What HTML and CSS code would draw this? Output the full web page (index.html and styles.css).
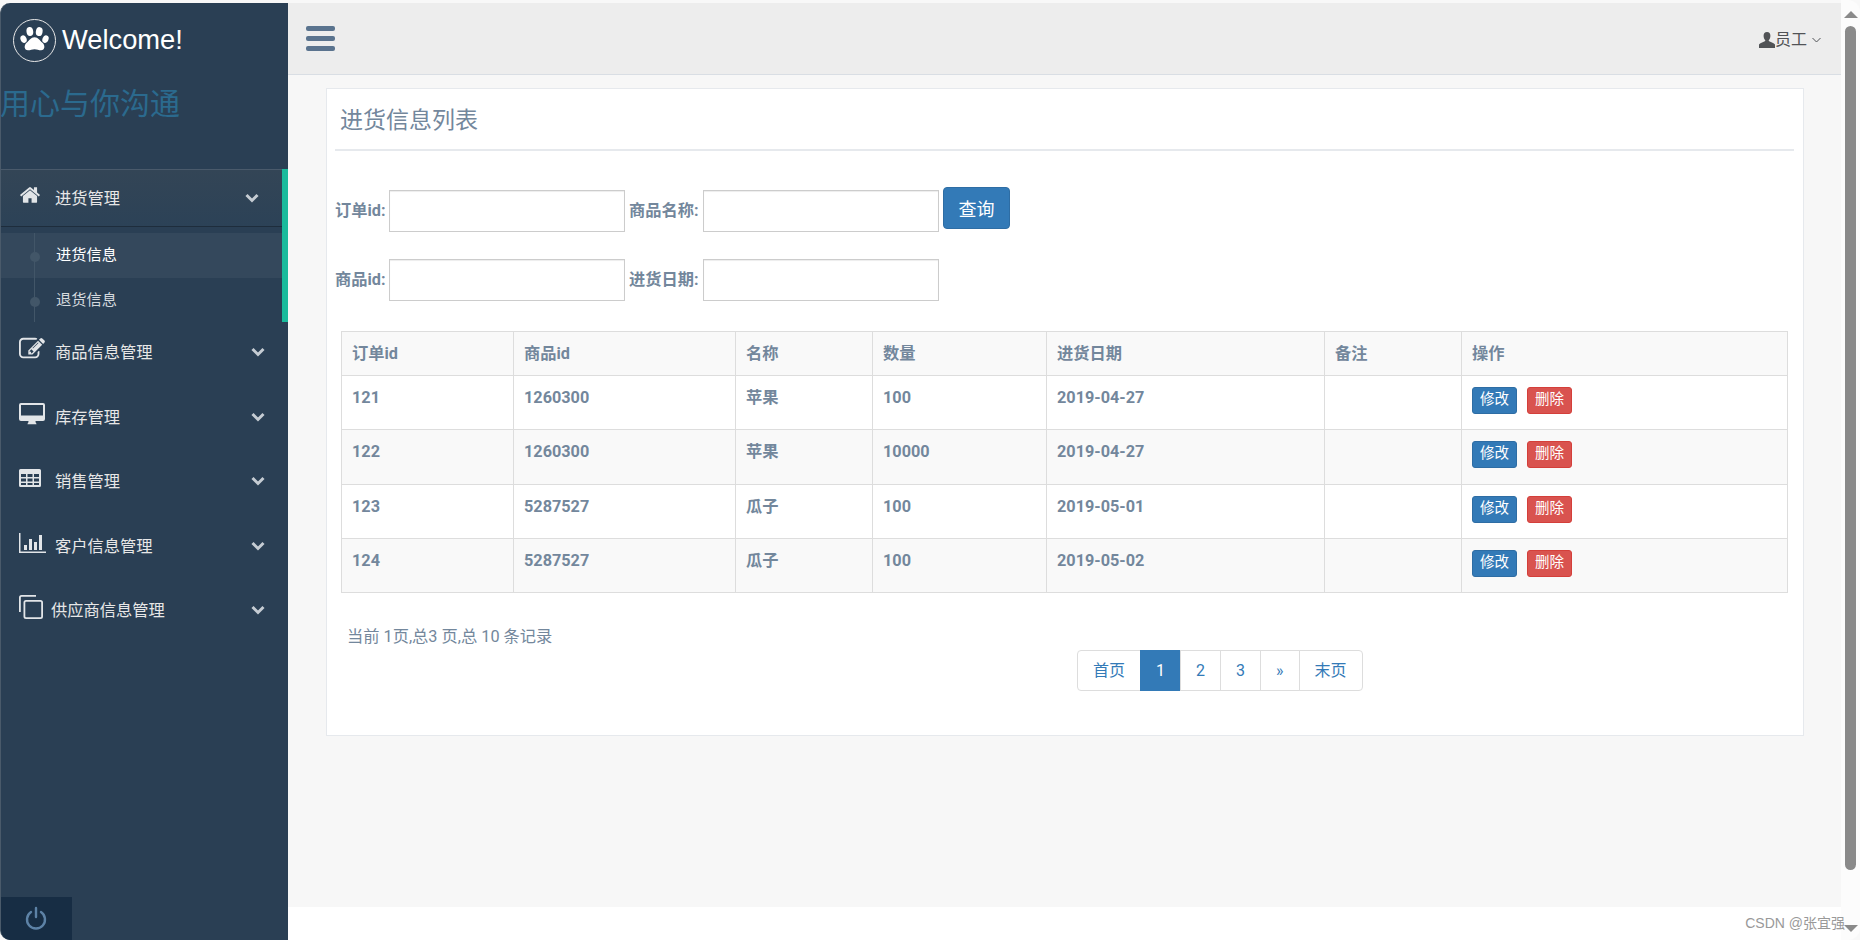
FILE: index.html
```html
<!DOCTYPE html>
<html lang="zh-CN">
<head>
  <meta charset="UTF-8">
  <title>进货信息列表</title>
  <link rel="stylesheet" href="styles.css">
</head>
<body>
  <div class="window">
    <!-- 左侧菜单 -->
    <aside class="sidebar">
      <div class="brand">
        <span class="brand-logo">
          <svg viewBox="0 0 32 32" width="30" height="30" fill="#fff">
            <ellipse cx="10.500" cy="7" rx="3.600" ry="4.800" transform="rotate(-8 10.500 7)"/>
            <ellipse cx="20.500" cy="7" rx="3.600" ry="4.800" transform="rotate(10 20.500 7)"/>
            <ellipse cx="3.800" cy="15" rx="3.200" ry="4.200" transform="rotate(-22 3.800 15)"/>
            <ellipse cx="27.200" cy="15" rx="3.200" ry="4.200" transform="rotate(22 27.200 15)"/>
            <path d="M15.500 13c4 0 5.500 3.500 8.500 6 3 2.700 2.700 8-1.500 8-2.800 0-4.200-1.200-7-1.200s-4.200 1.200-7 1.200c-4.200 0-4.500-5.300-1.500-8 3-2.500 4.500-6 8.500-6z"/>
          </svg>
        </span>
        <span class="brand-name">Welcome!</span>
      </div>
      <div class="tagline">用心与你沟通</div>

      <ul class="menu">
        <li class="menu-group open">
          <a class="menu-item" href="#">
            <svg class="menu-icon" viewBox="0 0 1792 1792" width="24" height="24"><path d="M1472 992v480q0 26-19 45t-45 19h-384v-384h-256v384h-384q-26 0-45-19t-19-45v-480q0-1 .5-3t.5-3l575-474 575 474q1 2 1 6zm223-69l-62 74q-8 9-21 11h-3q-13 0-21-7l-692-577-692 577q-12 8-24 7-13-2-21-11l-62-74q-8-10-7-23.500t11-21.500l719-599q32-26 76-26t76 26l244 204v-195q0-14 9-23t23-9h192q14 0 23 9t9 23v408l219 182q10 8 11 21.500t-7 23.500z"/></svg>
            <span class="menu-text">进货管理</span>
            <svg class="chevron" viewBox="0 0 14 10" width="14" height="10"><path d="M1.500 2l5.500 5.500 5.500-5.500"/></svg>
          </a>
          <ul class="submenu">
            <li class="current"><a href="#">进货信息</a></li>
            <li><a href="#">退货信息</a></li>
          </ul>
        </li>
        <li>
          <a class="menu-item" href="#">
            <svg class="menu-icon" viewBox="0 0 1792 1792" width="26" height="26"><path d="M888 1184l116-116-152-152-116 116v56h96v96h56zm440-720q-16-16-33 1l-350 350q-17 17-1 33t33-1l350-350q17-17 1-33zm80 594v190q0 119-84.500 203.500t-203.500 84.500h-832q-119 0-203.500-84.500t-84.500-203.500v-832q0-119 84.500-203.500t203.500-84.500h832q63 0 117 25 15 7 18 23 3 17-9 29l-49 49q-14 14-32 8-23-6-45-6h-832q-66 0-113 47t-47 113v832q0 66 47 113t113 47h832q66 0 113-47t47-113v-126q0-13 9-22l64-64q15-15 35-7t20 29zm-96-738l288 288-672 672h-288v-288zm444 132l-92 92-288-288 92-92q28-28 68-28t68 28l152 152q28 28 28 68t-28 68z"/></svg>
            <span class="menu-text">商品信息管理</span>
            <svg class="chevron" viewBox="0 0 14 10" width="14" height="10"><path d="M1.500 2l5.500 5.500 5.500-5.500"/></svg>
          </a>
        </li>
        <li>
          <a class="menu-item" href="#">
            <svg class="menu-icon" viewBox="0 0 26 22" width="26" height="22"><path fill-rule="evenodd" d="M2 0h22a2 2 0 0 1 2 2v14a2 2 0 0 1-2 2h-7.500c0 1.500.5 2 1 2.700v.6h-9v-.6c.5-.7 1-1.200 1-2.700H2a2 2 0 0 1-2-2V2a2 2 0 0 1 2-2zm0 2v10.500h22V2z"/></svg>
            <span class="menu-text">库存管理</span>
            <svg class="chevron" viewBox="0 0 14 10" width="14" height="10"><path d="M1.500 2l5.500 5.500 5.500-5.500"/></svg>
          </a>
        </li>
        <li>
          <a class="menu-item" href="#">
            <svg class="menu-icon" viewBox="0 0 22 18" width="22" height="18"><path fill-rule="evenodd" d="M1.500 0h19A1.500 1.500 0 0 1 22 1.500v15a1.500 1.500 0 0 1-1.500 1.500h-19A1.500 1.500 0 0 1 0 16.500v-15A1.500 1.500 0 0 1 1.500 0zM2 5v3h5V5zm6.500 0v3h5V5zM15 5v3h5V5zM2 9.500v3h5v-3zm6.500 0v3h5v-3zm6.500 0v3h5v-3zM2 14v2h5v-2zm6.500 0v2h5v-2zm6.500 0v2h5v-2z"/></svg>
            <span class="menu-text">销售管理</span>
            <svg class="chevron" viewBox="0 0 14 10" width="14" height="10"><path d="M1.500 2l5.500 5.500 5.500-5.500"/></svg>
          </a>
        </li>
        <li>
          <a class="menu-item" href="#">
            <svg class="menu-icon" viewBox="0 0 27 20" width="27" height="20"><path d="M0 0h1.500v18.500H27V20H0z"/><path d="M5 12h3v5H5zM10 6h3v11h-3zM15 9h3v8h-3zM20 2h3v15h-3z"/></svg>
            <span class="menu-text">客户信息管理</span>
            <svg class="chevron" viewBox="0 0 14 10" width="14" height="10"><path d="M1.500 2l5.500 5.500 5.500-5.500"/></svg>
          </a>
        </li>
        <li>
          <a class="menu-item menu-item-wide" href="#">
            <svg class="menu-icon" viewBox="0 0 24 24" width="24" height="24"><path d="M2.500 0H17v1.800H2.500a.7.7 0 0 0-.7.7V17H0V2.500A2.500 2.500 0 0 1 2.500 0z"/><path fill-rule="evenodd" d="M7 5h14.500A2.500 2.500 0 0 1 24 7.500v14a2.500 2.500 0 0 1-2.500 2.500H7a2.500 2.500 0 0 1-2.500-2.500v-14A2.500 2.500 0 0 1 7 5zm0 1.800a.7.700 0 0 0-.7.7v14c0 .4.300.7.700.7h14.500a.7.700 0 0 0 .7-.7v-14a.7.700 0 0 0-.7-.7z"/></svg>
            <span class="menu-text">供应商信息管理</span>
            <svg class="chevron" viewBox="0 0 14 10" width="14" height="10"><path d="M1.500 2l5.500 5.500 5.500-5.500"/></svg>
          </a>
        </li>
      </ul>

      <div class="sidebar-footer">
        <a class="logout" href="#">
          <svg viewBox="0 0 22 24" width="22" height="24" fill="none" stroke="#5d82a6" stroke-width="2.400" stroke-linecap="round"><path d="M11 2v9"/><path d="M6 6a9 9 0 1 0 10 0"/></svg>
        </a>
      </div>
    </aside>

    <div class="main">
      <header class="topbar">
        <a class="toggle" href="#"><i></i><i></i><i></i></a>
        <a class="user" href="#">
          <svg viewBox="0 0 16 16" width="16" height="16" fill="#515356"><path d="M8 0c2.300 0 3.400 1.600 3.400 3.800 0 1.700-.6 3.300-1.500 4.300-.3.400-.2 1 .3 1.200 2 .8 4.800 2 5.800 3.200.3.500 0 3.500 0 3.500H0s-.3-3 0-3.500c1-1.200 3.800-2.400 5.800-3.200.5-.2.600-.8.300-1.200-.9-1-1.500-2.600-1.500-4.300C4.600 1.600 5.700 0 8 0z"/></svg>
          <span>员工</span>
          <svg class="user-caret" viewBox="0 0 9 6" width="9" height="6"><path d="M.5 1l4 4 4-4"/></svg>
        </a>
      </header>

      <main class="content">
        <section class="panel">
          <h2 class="panel-title">进货信息列表</h2>

          <form class="search-form">
            <label>订单id:</label>
            <input type="text">
            <label>商品名称:</label>
            <input type="text">
            <button type="button" class="btn-query">查询</button>
            <label>商品id:</label>
            <input type="text">
            <label>进货日期:</label>
            <input type="text">
          </form>

          <table class="list">
            <thead>
              <tr>
                <th class="col-order">订单id</th>
                <th class="col-goods">商品id</th>
                <th class="col-name">名称</th>
                <th class="col-num">数量</th>
                <th class="col-date">进货日期</th>
                <th class="col-note">备注</th>
                <th>操作</th>
              </tr>
            </thead>
            <tbody>
              <tr>
                <td>121</td><td>1260300</td><td>苹果</td><td>100</td><td>2019-04-27</td><td></td>
                <td><a class="btn blue" href="#">修改</a><a class="btn red" href="#">删除</a></td>
              </tr>
              <tr>
                <td>122</td><td>1260300</td><td>苹果</td><td>10000</td><td>2019-04-27</td><td></td>
                <td><a class="btn blue" href="#">修改</a><a class="btn red" href="#">删除</a></td>
              </tr>
              <tr>
                <td>123</td><td>5287527</td><td>瓜子</td><td>100</td><td>2019-05-01</td><td></td>
                <td><a class="btn blue" href="#">修改</a><a class="btn red" href="#">删除</a></td>
              </tr>
              <tr>
                <td>124</td><td>5287527</td><td>瓜子</td><td>100</td><td>2019-05-02</td><td></td>
                <td><a class="btn blue" href="#">修改</a><a class="btn red" href="#">删除</a></td>
              </tr>
            </tbody>
          </table>

          <p class="page-info">当前 1页,总3 页,总 10 条记录</p>
          <ul class="pagination">
            <li><a href="#">首页</a></li>
            <li class="active"><a href="#">1</a></li>
            <li><a href="#">2</a></li>
            <li><a href="#">3</a></li>
            <li><a href="#">»</a></li>
            <li><a href="#">末页</a></li>
          </ul>
        </section>
      </main>
      <div class="page-bottom"></div>
    </div>

    <!-- 滚动条 -->
    <div class="scrollbar">
      <span class="arrow-up"></span>
      <span class="thumb"></span>
      <span class="arrow-down"></span>
    </div>
  </div>
  <div class="watermark">CSDN @张宜强</div>
</body>
</html>
```

FILE: styles.css
```css
/* 通用样式 */
* {
  margin: 0;
  padding: 0;
  box-sizing: border-box;
}
a {
  color: inherit;
  text-decoration: none;
}
ul {
  list-style: none;
}
html, body {
  height: 100%;
  overflow: hidden;
}
body {
  position: relative;
  font: 16.250px/22px Roboto, "Noto Sans CJK SC", sans-serif;
  color: #73879c;
  background: #fff;
}
.window {
  display: flex;
  height: 940px;
  background: #f8f8f8;
}

/* 左侧菜单 */
.sidebar {
  display: flex;
  flex-direction: column;
  flex: none;
  width: 288px;
  margin-top: 3px;
  border-left: 1px solid #4a5a6a;
  border-radius: 10px 0 0 10px;
  color: #e7e7e7;
  background: #2a3f54;
  overflow: hidden;
}
.brand {
  display: flex;
  align-items: center;
  height: 74px;
  padding-left: 12px;
}
.brand-logo {
  display: flex;
  align-items: center;
  justify-content: center;
  width: 43px;
  height: 43px;
  border: 1px solid #e7e7e7;
  border-radius: 50%;
}
.brand-name {
  margin-left: 6px;
  font: 27.300px/36px "Liberation Sans", sans-serif;
  color: #fff;
}
.tagline {
  height: 92px;
  margin-left: -1px;
  padding-top: 7px;
  font-size: 30px;
  line-height: 40px;
  color: #2b6a8e;
}
.menu {
  flex: 1;
}
.menu-item {
  position: relative;
  display: flex;
  align-items: center;
  height: 64.500px;
  padding-left: 18px;
}
.menu-icon {
  flex: none;
  margin-top: -10px;
  fill: #e2e5e8;
}
.menu-text {
  position: absolute;
  left: 54px;
  margin-top: -2px;
}
.menu-item-wide .menu-text {
  left: 50px;
}
.chevron {
  position: absolute;
  left: 250px;
  top: 25px;
  fill: none;
  stroke: #c5ccd3;
  stroke-width: 3;
}

/* 展开的菜单组 */
.menu-group.open {
  border-right: 6px solid #1abb9c;
}
.menu-group.open .menu-item {
  height: 58px;
  border-top: 1px solid #4a5a6b;
  border-bottom: 1px solid #1e2d3c;
  background: linear-gradient(#334556, #2c4257);
}
.menu-group.open .menu-text {
  margin-top: 2px;
}
.menu-group.open .chevron {
  left: 244px;
  top: 23px;
}
.menu-group.open .menu-icon {
  margin-top: -6px;
  width: 22px;
}
.submenu {
  position: relative;
  margin-top: 6px;
}
.submenu::before {
  content: '';
  position: absolute;
  z-index: 1;
  top: 0;
  bottom: 0;
  left: 33px;
  width: 1px;
  background: #425668;
}
.submenu li {
  position: relative;
  height: 44.500px;
  padding-left: 55px;
  font-size: 15.250px;
  line-height: 44px;
  color: #d5dade;
}
.submenu li::before {
  content: '';
  position: absolute;
  z-index: 1;
  top: 19px;
  left: 28.500px;
  width: 10px;
  height: 10px;
  border-radius: 50%;
  background: #425668;
}
.submenu li.current {
  color: #fff;
  background: #34485c;
}
.sidebar-footer {
  height: 43px;
}
.logout {
  display: flex;
  align-items: center;
  justify-content: center;
  width: 71px;
  height: 43px;
  padding: 0 2px 2px 0;
  background: #172d44;
}

/* 顶部栏 */
.main {
  display: flex;
  flex-direction: column;
  flex: 1;
  min-width: 0;
}
.topbar {
  display: flex;
  align-items: center;
  justify-content: space-between;
  flex: none;
  height: 72px;
  margin-top: 3px;
  padding: 0 20px 0 18px;
  border-bottom: 1px solid #d9dee4;
  background: #ededed;
}
.toggle {
  display: flex;
  flex-direction: column;
  gap: 5px;
  width: 29px;
}
.toggle i {
  height: 5px;
  border-radius: 2px;
  background: #5a738e;
}
.user {
  display: flex;
  align-items: center;
  padding-top: 3px;
  color: #515356;
  font-size: 16px;
}
.user-caret {
  margin-left: 5px;
  fill: none;
  stroke: #515356;
}

/* 内容区 */
.content {
  flex: 1;
  padding: 13px 37px 0 38px;
  background: #f7f7f7;
}
.page-bottom {
  flex: none;
  height: 33px;
  background: #fff;
}
.panel {
  height: 648px;
  padding: 0 9px 0 8px;
  border: 1px solid #e6e9ed;
  background: #fff;
}
.panel-title {
  height: 62px;
  padding: 17px 5px 0;
  border-bottom: 2px solid #e6e9ed;
  font-size: 23px;
  font-weight: 400;
  line-height: 30px;
}

/* 查询表单 */
.search-form {
  display: grid;
  grid-template-columns: 50px 236px 70px 236px 67px;
  column-gap: 4px;
  row-gap: 27px;
  align-items: center;
  margin-top: 39px;
}
.search-form label {
  font-weight: 700;
  white-space: nowrap;
}
.search-form input {
  width: 236px;
  height: 42px;
  border: 1px solid #ccc;
  box-shadow: inset 0 1px 1px rgba(0, 0, 0, .075);
  outline: none;
}
.btn-query {
  align-self: start;
  height: 42px;
  margin-top: -3px;
  border: 1px solid #2e6da4;
  border-radius: 4px;
  font: 18px Roboto, "Noto Sans CJK SC", sans-serif;
  color: #fff;
  background: #337ab7;
}

/* 表格 */
.list {
  width: 1447px;
  margin: 30px 0 0 6px;
  border-collapse: collapse;
  table-layout: fixed;
  font-weight: 700;
}
.list th,
.list td {
  padding: 11px 10px 10px;
  border: 1px solid #ddd;
  text-align: left;
  vertical-align: top;
}
.list thead tr {
  height: 44px;
}
.list tbody tr {
  height: 54.250px;
}
.list th {
  background: #f9f9f9;
}
.list tbody tr:nth-child(even) {
  background: #f9f9f9;
}
.col-order { width: 172px; }
.col-goods { width: 222px; }
.col-name { width: 137px; }
.col-num { width: 174px; }
.col-date { width: 278px; }
.col-note { width: 137px; }
.btn {
  display: inline-block;
  width: 45px;
  height: 27px;
  margin: 0 10px 0 0;
  border: 1px solid;
  border-radius: 3px;
  font-size: 14.500px;
  font-weight: 400;
  line-height: 24px;
  text-align: center;
  color: #fff;
  vertical-align: top;
}
.btn.blue {
  border-color: #2e6da4;
  background: #337ab7;
}
.btn.red {
  border-color: #d43f3a;
  background: #d9534f;
}

/* 分页 */
.page-info {
  margin: 33px 0 0 12px;
}
.pagination {
  display: flex;
  width: max-content;
  margin: 2px 0 0 742px;
  border-radius: 4px;
  font-size: 16px;
}
.pagination a {
  display: block;
  height: 41px;
  margin-left: -1px;
  padding: 0 15px;
  border: 1px solid #ddd;
  line-height: 39px;
  color: #337ab7;
  background: #fff;
}
.pagination li:first-child a {
  margin-left: 0;
  border-radius: 4px 0 0 4px;
}
.pagination li:last-child a {
  border-radius: 0 4px 4px 0;
}
.pagination .active a {
  border-color: #337ab7;
  color: #fff;
  background: #337ab7;
}

/* 滚动条 */
.scrollbar {
  position: relative;
  display: flex;
  flex-direction: column;
  align-items: center;
  flex: none;
  width: 19px;
  height: 100%;
  border-radius: 0 12px 12px 0;
  background: #fcfcfc;
}
.arrow-up {
  margin-top: 11px;
  border: 7px solid transparent;
  border-top: 0;
  border-bottom-color: #8a8a8a;
}
.thumb {
  width: 11px;
  height: 844px;
  margin-top: 8px;
  border-radius: 6px;
  background: #8a8a8a;
}
.arrow-down {
  margin-top: 55px;
  border: 7px solid transparent;
  border-bottom: 0;
  border-top-color: #8a8a8a;
}
.watermark {
  position: absolute;
  right: 15px;
  bottom: 7px;
  font: 14px/20px "Liberation Sans", "Noto Sans CJK SC", sans-serif;
  color: #999;
}
```
